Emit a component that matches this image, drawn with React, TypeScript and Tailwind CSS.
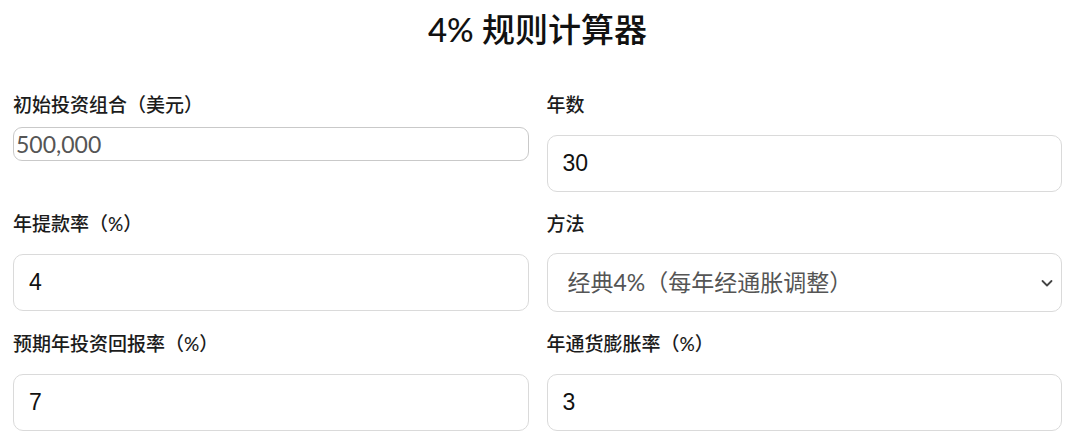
import React, { useState } from 'react';

const fontStack = { fontFamily: 'Lato, "Noto Sans CJK SC", sans-serif' };

function Label({ children }: { children: React.ReactNode }) {
  return <label className="block text-[19px] leading-6 font-medium text-[#1c1c1c]">{children}</label>;
}

function NumberField({ label, value, onChange }: { label: string; value: string; onChange: (v: string) => void }) {
  return (
    <div className="flex flex-col">
      <Label>{label}</Label>
      <input
        type="number"
        value={value}
        onChange={(e) => onChange(e.target.value)}
        className="mt-[18px] h-[57px] w-full rounded-[10px] border border-[#dadada] bg-white px-[15px] text-[23px] text-[#111] outline-none [font-family:'Liberation_Sans',Arial,sans-serif]"
      />
    </div>
  );
}

export default function App() {
  const [portfolio, setPortfolio] = useState('');
  const [years, setYears] = useState('30');
  const [rate, setRate] = useState('4');
  const [method, setMethod] = useState('classic');
  const [returns, setReturns] = useState('7');
  const [inflation, setInflation] = useState('3');

  return (
    <div className="min-h-screen bg-white pl-[13px] pr-[18px] pt-[9px]" style={fontStack}>
      {/* Title */}
      <h1 className="text-center text-[33px] leading-[40px] font-medium text-[#111]">4% 规则计算器</h1>

      {/* Form */}
      <div className="mt-[44px] grid grid-cols-2 gap-x-[18px] gap-y-[20px]">
        <div className="flex flex-col">
          <Label>初始投资组合（美元）</Label>
          <input
            type="text"
            value={portfolio}
            placeholder="500,000"
            onChange={(e) => setPortfolio(e.target.value)}
            className="mt-[10px] h-[34px] w-full rounded-[9px] border border-[#c9c9c9] px-[2px] text-[23px] leading-[30px] text-[#111] outline-none placeholder:text-[#555]"
          />
        </div>
        <NumberField label="年数" value={years} onChange={setYears} />

        <NumberField label="年提款率（%）" value={rate} onChange={setRate} />
        <div className="flex flex-col">
          <Label>方法</Label>
          <div className="relative mt-[17px]">
            <select
              value={method}
              onChange={(e) => setMethod(e.target.value)}
              className="h-[59px] w-full appearance-none rounded-[10px] border border-[#dadada] bg-white pl-[20px] pr-[40px] text-[23px] text-[#555] outline-none"
            >
              <option value="classic">经典4%（每年经通胀调整）</option>
              <option value="fixed">固定百分比</option>
            </select>
            <svg
              className="pointer-events-none absolute right-[8px] top-1/2 -translate-y-1/2"
              width="14"
              height="14"
              viewBox="0 0 14 14"
              fill="none"
            >
              <path d="M2.5 5l4.5 4.5L11.5 5" stroke="#444" strokeWidth="1.8" strokeLinecap="round" strokeLinejoin="round" />
            </svg>
          </div>
        </div>

        <NumberField label="预期年投资回报率（%）" value={returns} onChange={setReturns} />
        <NumberField label="年通货膨胀率（%）" value={inflation} onChange={setInflation} />
      </div>
    </div>
  );
}
